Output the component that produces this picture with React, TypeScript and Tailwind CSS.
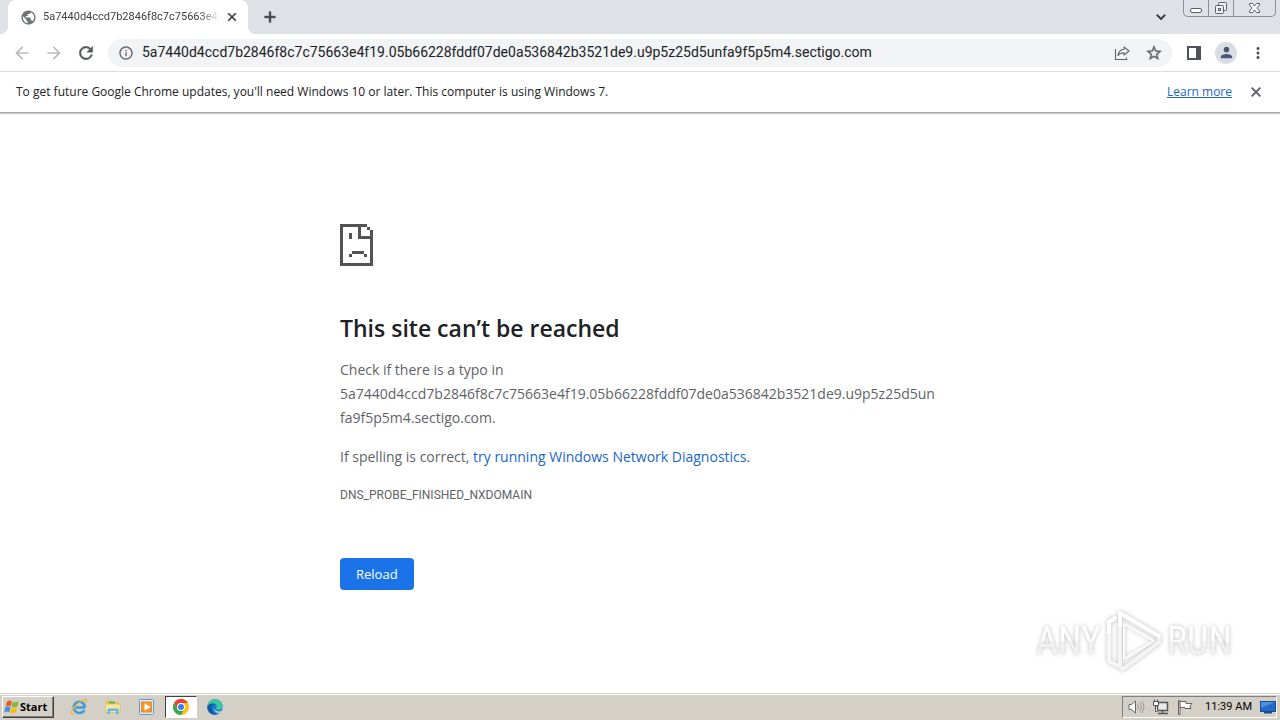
import type { ReactNode } from "react";
import {
  MdArrowBack,
  MdArrowForward,
  MdRefresh,
  MdInfoOutline,
  MdStarBorder,
  MdMoreVert,
  MdPerson,
  MdClose,
  MdAdd,
  MdPublic,
  MdExpandMore,
} from "react-icons/md";

const HOST =
  "5a7440d4ccd7b2846f8c7c75663e4f19.05b66228fddf07de0a536842b3521de9.u9p5z25d5unfa9f5p5m4.sectigo.com";

const TAB_TITLE = HOST.slice(0, 30);

function IconButton({ label, className = "", children }: { label: string; className?: string; children: ReactNode }) {
  return (
    <button type="button" aria-label={label} className={`flex shrink-0 items-center justify-center ${className}`}>
      {children}
    </button>
  );
}

function WindowControls() {
  return (
    <div className="mr-1 flex h-[17px] overflow-hidden rounded-b-[5px] border border-t-0 border-[#8b8e94] text-[#5c5f66]">
      <IconButton label="Minimize" className="w-[25px] border-r border-[#8b8e94]">
        <svg width="14" height="14" viewBox="0 0 14 14" fill="#fff" stroke="currentColor">
          <rect x="1.5" y="7.5" width="11" height="4" rx="1.5" />
        </svg>
      </IconButton>
      <IconButton label="Restore" className="w-[25px] border-r border-[#8b8e94]">
        <svg width="14" height="14" viewBox="0 0 14 14" fill="#eef0f3" stroke="currentColor">
          <rect x="4.500" y="1.500" width="8" height="8" rx="1" />
          <rect x="1.500" y="4.500" width="8" height="8" rx="1" />
          <rect x="4.500" y="7.500" width="2" height="2" />
        </svg>
      </IconButton>
      <IconButton label="Close window" className="w-[41px]">
        <svg width="13" height="12" viewBox="0 0 13 12" fill="#fff" stroke="currentColor">
          <path d="M1.500 1.500h3l2 2.500 2-2.500h3v1.500l-2.700 3 2.700 3v1.500h-3l-2-2.500-2 2.500h-3v-1.500l2.700-3-2.700-3z" />
        </svg>
      </IconButton>
    </div>
  );
}

function TabStrip() {
  return (
    <div className="flex h-[34px] items-start bg-[#dee1e6] pl-2">
      <div className="relative flex h-[34px] w-60 items-center rounded-t-lg bg-white pr-2 pl-3">
        <span className="absolute bottom-0 -left-2 size-2 bg-[radial-gradient(circle_at_0_0,transparent_8px,white_8px)]" />
        <span className="absolute -right-2 bottom-0 size-2 bg-[radial-gradient(circle_at_100%_0,transparent_8px,white_8px)]" />
        <MdPublic className="size-[17px] shrink-0 text-[#6f7378]" />
        <span className="ml-[6px] flex-1 overflow-hidden [font-family:Roboto,sans-serif] text-[11px] whitespace-nowrap text-[#3c4043] [mask-image:linear-gradient(to_right,black_88%,transparent)]">
          {TAB_TITLE}
        </span>
        <IconButton label="Close tab" className="ml-1 size-4 text-[#3c4043]">
          <MdClose className="size-[14px] [&>path:last-child]:stroke-1" />
        </IconButton>
      </div>
      <IconButton label="New tab" className="ml-3 h-[34px] w-5 text-[#3c4043]">
        <MdAdd className="size-[18px] [&>path:last-child]:stroke-1" />
      </IconButton>
      <div className="flex-1" />
      <IconButton label="Search tabs" className="mr-3 h-[34px] w-5 text-[#3c4043]">
        <MdExpandMore className="size-[18px] [&>path:last-child]:stroke-1" />
      </IconButton>
      <WindowControls />
    </div>
  );
}

function Toolbar() {
  return (
    <div className="flex h-[38px] items-center border-b border-[#dadce0] pr-3 pl-3">
      <div className="flex gap-3">
        <IconButton label="Back" className="size-5 text-[#babcbe]">
          <MdArrowBack className="size-5" />
        </IconButton>
        <IconButton label="Forward" className="size-5 text-[#babcbe]">
          <MdArrowForward className="size-5" />
        </IconButton>
        <IconButton label="Reload page" className="size-5 text-[#55585c]">
          <MdRefresh className="size-5 [&>path:last-child]:stroke-[0.5]" />
        </IconButton>
      </div>
      <div className="ml-3 flex h-7 flex-1 items-center rounded-full bg-[#f1f3f4] pr-2 pl-[10px] text-[#5f6368]">
        <IconButton label="View site information" className="size-4">
          <MdInfoOutline className="size-4" />
        </IconButton>
        <input
          type="text"
          aria-label="Address and search bar"
          defaultValue={HOST}
          className="ml-2 min-w-0 flex-1 bg-transparent [font-family:Roboto,sans-serif] text-[14px] text-[#202124] outline-none"
        />
        <IconButton label="Share this page" className="mr-[14px] size-4">
          <svg width="16" height="16" viewBox="0 0 16 16" fill="none" stroke="currentColor" strokeWidth="1.1">
            <path d="M1.500 4v10.500h11v-2" />
            <path d="M10 2l5 4-5 4v-2.300c-2.800 0-4.700.8-6 2.800.4-3.400 2.400-6 6-6.300z" strokeLinejoin="round" />
          </svg>
        </IconButton>
        <IconButton label="Bookmark this page" className="size-5">
          <MdStarBorder className="size-[18px] [&>path:last-child]:stroke-[0.5]" />
        </IconButton>
      </div>
      <div className="ml-3 flex items-center gap-[11px] text-[#4f5257]">
        <IconButton label="Side panel" className="size-5">
          <svg width="14" height="14" viewBox="0 0 14 14" fill="currentColor">
            <path d="M0 0h14v14H0z M2 2v10h7V2z" fillRule="evenodd" />
          </svg>
        </IconButton>
        <IconButton label="Profile" className="size-[22px] rounded-full bg-[#dadde3] text-[#4a5878]">
          <MdPerson className="size-[17px]" />
        </IconButton>
        <IconButton label="Menu" className="size-5">
          <MdMoreVert className="size-[18px]" />
        </IconButton>
      </div>
    </div>
  );
}

function UpdateNotice() {
  return (
    <div className="flex h-10 items-center pr-4 pl-4 text-[12px] text-[#202124]">
      <p className="flex-1">
        To get future Google Chrome updates, you'll need Windows 10 or later. This computer is using Windows 7.
      </p>
      <a href="#learn-more" className="text-[#1a66c9] underline">
        Learn more
      </a>
      <IconButton label="Dismiss" className="ml-4 size-4 text-[#5f6368]">
        <MdClose className="size-4 [&>path:last-child]:stroke-1" />
      </IconButton>
    </div>
  );
}

function SadPage() {
  return (
    <svg width="33" height="42" viewBox="0 0 11 14" fill="#535353" shapeRendering="crispEdges" aria-hidden="true">
      <path d="M0 0h9v1H7v3h3V2h1v12H0z M1 1v12h9V5H6V1z M9 1h1v1H9z" fillRule="evenodd" />
      <path d="M3 3h1v2H3z M4 9h4v1H4z M3 10h1v1H3z M8 10h1v1H8z" />
    </svg>
  );
}

function Watermark() {
  return (
    <div className="absolute right-12 bottom-5 flex items-center gap-1 [font-family:'Roboto_Condensed',Roboto,sans-serif] text-[38px] leading-10 font-normal [filter:drop-shadow(0_0_2px_#bbb)]">
      <span className="bg-linear-to-b from-white from-50% to-[#f1f1f1] to-50% bg-clip-text text-transparent">ANY</span>
      <svg width="58" height="64" viewBox="0 0 58 64" fill="none" strokeLinejoin="round" aria-hidden="true">
        <path d="M15 4l39 23v6L18 60l-3-2V4" stroke="#f4f4f4" strokeWidth="4" />
        <path d="M9 10l-5 3v39l9 5" stroke="#f6f6f6" strokeWidth="4" />
        <path d="M4 22v-9l6-4M15 16V4l39 23" stroke="#fff" strokeWidth="4" strokeLinecap="round" />
        <path d="M19 15l30 17-30 18z" stroke="#fff" strokeWidth="2" />
      </svg>
      <span className="bg-linear-to-b from-white from-50% to-[#f1f1f1] to-50% bg-clip-text text-transparent">RUN</span>
    </div>
  );
}

function ErrorPage() {
  return (
    <main className="relative flex-1 border-t border-[#a8a8a8] px-6 pt-[111px] shadow-[inset_0_1px_0_#cfcfcf,inset_0_2px_0_#efefef]">
      <div className="mx-auto max-w-[600px] text-[14px] leading-6 text-[#5f6368]">
        <SadPage />
        <h1 className="mt-[46px] text-[23px] leading-8 font-semibold text-[#202124]">This site can’t be reached</h1>
        <p className="mt-[14px] pr-1 break-all">
          Check if there is a typo in
          <br />
          {`${HOST}.`}
        </p>
        <p className="mt-[15px]">
          If spelling is correct,{" "}
          <a href="#diagnostics" className="text-[#1a66c9]">
            try running Windows Network Diagnostics
          </a>
          .
        </p>
        <p className="mt-[14px] [font-family:Roboto,sans-serif] text-[12px]">DNS_PROBE_FINISHED_NXDOMAIN</p>
        <button type="button" className="mt-[51px] h-8 rounded bg-[#1a73e8] px-4 text-[13px] text-white">
          Reload
        </button>
      </div>
      <Watermark />
    </main>
  );
}

function WindowsFlag() {
  return (
    <svg width="16" height="16" viewBox="0 0 16 16" aria-hidden="true">
      <path d="M3 2.500c2-1.300 3.500-1 5-.2L6.800 7.300C5.300 6.500 3.700 6.400 1.700 7.400z" fill="#ef5a24" />
      <path d="M8.800 2.700c1.700.8 3.800.8 6-.5L13.500 7.300c-2 1.200-4 1.200-5.900.4z" fill="#7fba2f" />
      <path d="M1.500 8.300c2-1.100 3.500-.9 5-.1l-1.300 5c-1.500-.8-3-.9-5 .2z" fill="#3f8fdc" />
      <path d="M7.300 8.700c1.800.8 3.800.7 5.900-.5L12 13.200c-2.100 1.300-4.200 1.300-6 .4z" fill="#fbbc1a" />
    </svg>
  );
}

function ExplorerIcon() {
  return (
    <svg width="18" height="18" viewBox="0 0 18 18" fill="none">
      <path d="M15 9.500H5.500M14.700 9.500c0-3.200-2.200-5.700-5.300-5.700S3.800 6.300 3.800 9.500s2.300 5.500 5.500 5.500c2.400 0 4.200-1.100 5-3" stroke="#3d9bdc" strokeWidth="2.600" />
      <path d="M4 15.500c-2.500 1.500-3.500.5-2.200-2.400C3.500 9 9 3.800 13.500 2c3-1 3.500.7 2.400 3" stroke="#e9b83a" strokeWidth="1.300" />
    </svg>
  );
}

function FolderIcon() {
  return (
    <svg width="18" height="18" viewBox="0 0 18 18">
      <path d="M2 2.500h5l1 1.500h7V15H2z" fill="#e8c65c" />
      <path d="M5 3.500h6v2H5z" fill="#57b157" />
      <path d="M1.500 6h14.500v8.500H1.500z" fill="#f8e6a0" stroke="#d7b750" strokeWidth=".6" />
      <path d="M3.500 16v-4c0-1 .5-1.500 1.500-1.500h8c1 0 1.500.5 1.500 1.500v4H12v-3H6v3z" fill="#65b7e3" />
    </svg>
  );
}

function PlayerIcon() {
  return (
    <svg width="18" height="18" viewBox="0 0 18 18">
      <rect x="1.500" y="1.500" width="14" height="15" rx="1" fill="#d9ecf8" stroke="#5a9bc9" />
      <rect x="3" y="3.500" width="11" height="11" rx="1" fill="#ed8a1c" />
      <circle cx="8.500" cy="9" r="4.800" fill="#f49b2d" />
      <path d="M6.500 5.500l6 3.500-6 3.500z" fill="#fff" />
    </svg>
  );
}

function ChromeIcon() {
  return (
    <svg width="16" height="16" viewBox="0 0 16 16">
      <circle cx="8" cy="8" r="8" fill="#fbc116" />
      <path d="M1.070 4A8 8 0 0 1 14.930 4H8a4 4 0 0 0-3.460 6z" fill="#ea4335" />
      <path d="M1.070 4A8 8 0 0 0 8 16l3.460-6A4 4 0 0 1 4.540 10z" fill="#34a853" />
      <circle cx="8" cy="8" r="4" fill="#fff" />
      <circle cx="8" cy="8" r="3" fill="#3b7ded" />
    </svg>
  );
}

function EdgeIcon() {
  return (
    <svg width="16" height="16" viewBox="0 0 16 16">
      <circle cx="8" cy="8" r="7.700" fill="#1b7fd0" />
      <path d="M.3 8C.3 3.500 3.700.3 8 .3c4.500 0 7.700 2.900 7.700 6.400 0 2.500-1.900 4-4.200 4-1.700 0-2.500-.6-2.500-1.300 0-.5.800-.8.800-2C9.800 5.800 8.200 4.500 6 4.500 3 4.500.8 6 .3 8z" fill="#3bc6a4" />
      <path d="M.3 8C.8 6 3 4.500 6 4.500c1 0 1.900.3 2.600.8C6 5.500 4.800 7.500 5 9.800c.2 2.900 2.300 5 5 5.500C4.500 17 .3 13 .3 8z" fill="#0d5aa5" />
      <path d="M7.200 9.500c.5 2.600 4 3.800 7.200 2.600-.4.700-1 1.300-1.700 1.800C9.500 14.500 6.700 12 7.200 9.500z" fill="#d4d0c8" />
    </svg>
  );
}

function Taskbar() {
  return (
    <footer className="flex h-[27px] items-center border-t border-[#d4d0c8] bg-[#d4d0c8] pr-[3px] pl-[2px] shadow-[inset_0_1px_0_#fff]">
      <button
        type="button"
        className="flex h-[22px] w-[52px] items-center border border-t-white border-r-[#404040] border-b-[#404040] border-l-white pl-px text-[11px] font-bold text-black shadow-[inset_-1px_-1px_0_#808080]"
      >
        <WindowsFlag />
        Start
      </button>
      <nav className="ml-2 flex items-center">
        <IconButton label="Internet Explorer" className="h-[22px] w-[34px]"><ExplorerIcon /></IconButton>
        <IconButton label="File explorer" className="h-[22px] w-[34px]"><FolderIcon /></IconButton>
        <IconButton label="Media player" className="h-[22px] w-[34px]"><PlayerIcon /></IconButton>
        <IconButton
          label="Chrome"
          className="ml-px h-[22px] w-8 border border-t-[#404040] border-r-white border-b-white border-l-[#404040] bg-white"
        >
          <ChromeIcon />
        </IconButton>
        <IconButton label="Edge" className="h-[22px] w-9"><EdgeIcon /></IconButton>
      </nav>
      <div className="ml-auto flex h-[22px] items-center border border-t-[#808080] border-r-white border-b-white border-l-[#808080] pl-[5px] text-[11px] text-black">
        <svg width="17" height="16" viewBox="0 0 17 16" fill="#fff" stroke="#666" aria-hidden="true">
          <path d="M1 5.500h2.500L7.500 2v12l-4-3.500H1z" />
          <path d="M9.500 5.500q2 2.500 0 5M11.500 3.500q3.500 4.500 0 9M13.500 2q5 6 0 12" fill="none" stroke="#888" strokeWidth=".8" />
        </svg>
        <svg className="ml-2" width="16" height="16" viewBox="0 0 16 16" fill="#e9e9e9" stroke="#555" aria-hidden="true">
          <rect x="4.500" y="3.500" width="10" height="8" strokeWidth="1.500" />
          <path d="M5 14.500h10M9.500 12v2" strokeWidth="1.500" />
          <path d="M.5 2.500v4h5v-4zM1.500.5v2M4.500.5v2M2.500 6.500v6h2" fill="#fff" />
        </svg>
        <svg className="ml-2" width="16" height="16" viewBox="0 0 16 16" fill="#fff" stroke="#666" aria-hidden="true">
          <path d="M1.500 1.500v14h1.500v-14z" />
          <path d="M3 2.500h6v2h6l-2 2.500 1 2.500H8v-1H3z" />
        </svg>
        <span className="ml-3 [font-family:Roboto,sans-serif] whitespace-nowrap">11:39 AM</span>
        <svg className="ml-2" width="16" height="16" viewBox="0 0 16 16" aria-hidden="true">
          <rect x="0.500" y="2.500" width="15" height="10" fill="#2469c7" stroke="#164a91" />
          <path d="M1 3h14L1 9z" fill="#4d90dc" />
          <path d="M4 13h8v1.500H4z" fill="#244b7a" />
        </svg>
      </div>
    </footer>
  );
}

export default function App() {
  return (
    <div className="flex min-h-screen flex-col bg-white [font-family:'Open_Sans','Noto_Sans',sans-serif]">
      <header>
        <TabStrip />
        <Toolbar />
        <UpdateNotice />
      </header>
      <ErrorPage />
      <Taskbar />
    </div>
  );
}
